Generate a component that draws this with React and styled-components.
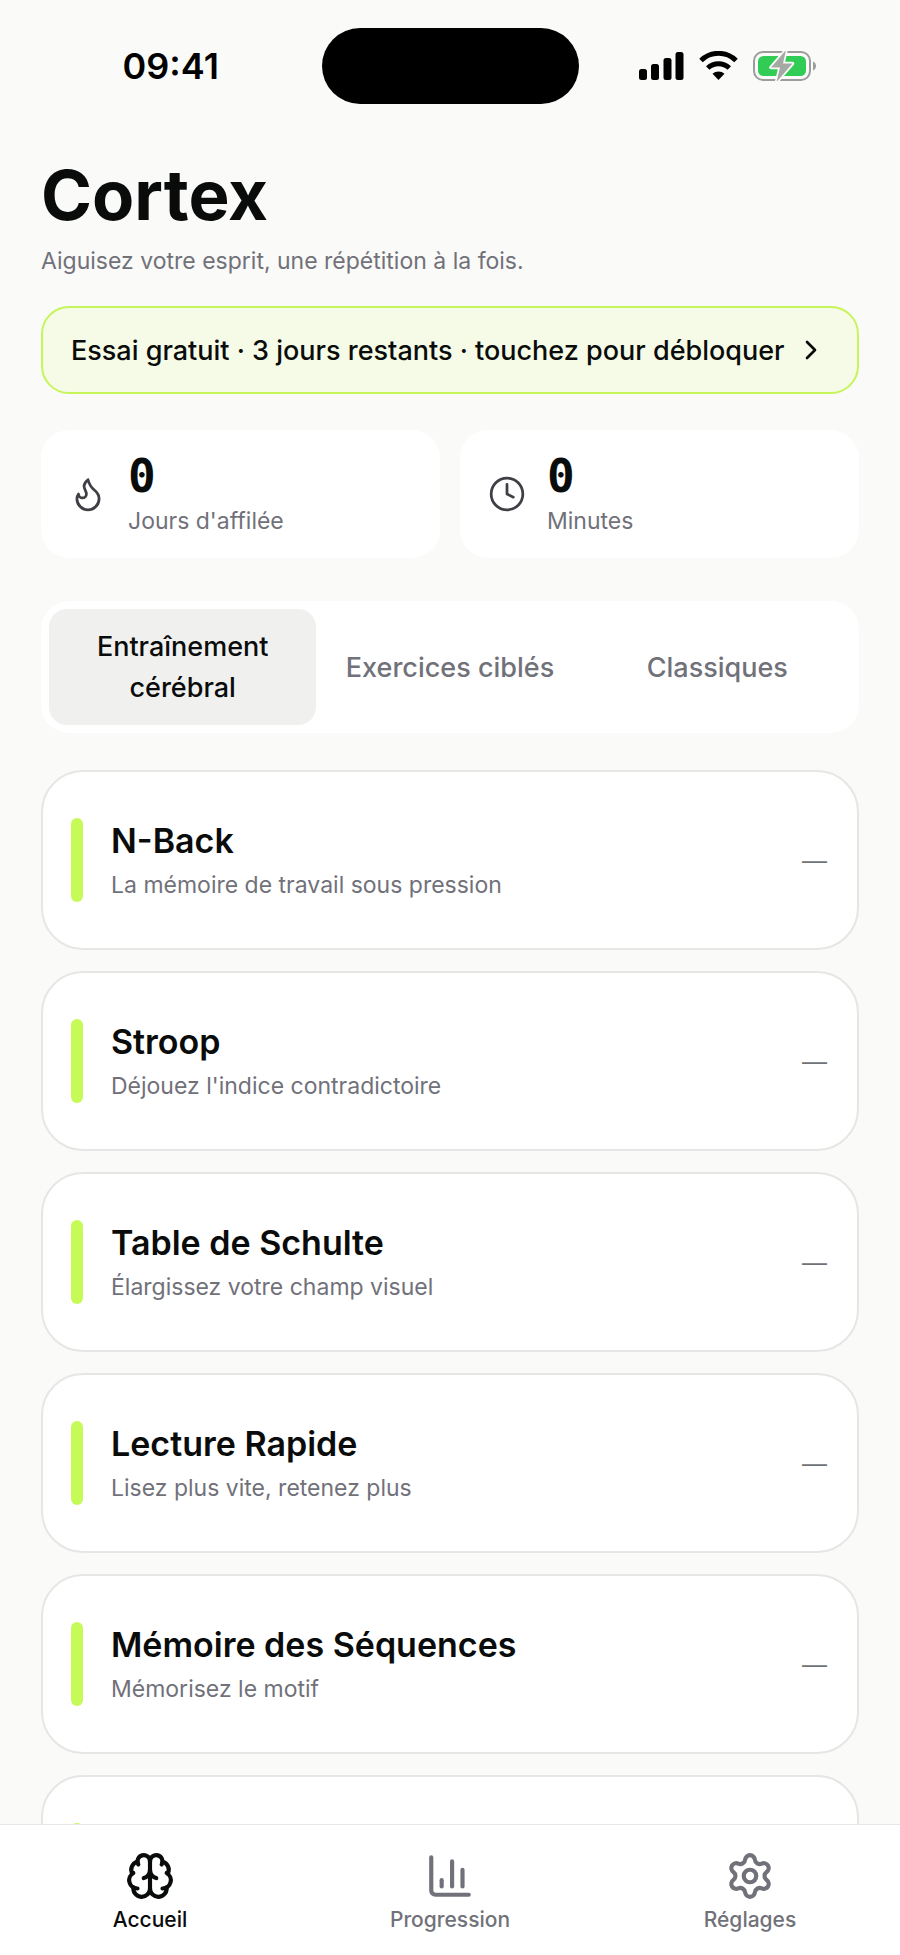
import React, { useState } from 'react';
import styled, { createGlobalStyle } from 'styled-components';
import { Brain, ChartColumn, ChevronRight, Clock, Flame, Settings } from 'lucide-react';

const stats = [
  { label: "Jours d'affilée", value: 0, icon: Flame },
  { label: 'Minutes', value: 0, icon: Clock },
];

const tabs = ['Entraînement cérébral', 'Exercices ciblés', 'Classiques'];

const exercises = [
  { name: 'N-Back', hint: 'La mémoire de travail sous pression' },
  { name: 'Stroop', hint: "Déjouez l'indice contradictoire" },
  { name: 'Table de Schulte', hint: 'Élargissez votre champ visuel' },
  { name: 'Lecture Rapide', hint: 'Lisez plus vite, retenez plus' },
  { name: 'Mémoire des Séquences', hint: 'Mémorisez le motif' },
];

const navItems = [
  { label: 'Accueil', icon: Brain, href: '#accueil' },
  { label: 'Progression', icon: ChartColumn, href: '#progression' },
  { label: 'Réglages', icon: Settings, href: '#reglages' },
];

const GlobalStyle = createGlobalStyle`
  * {
    box-sizing: border-box;
  }

  body {
    margin: 0;
    background: #fafaf8;
    color: #0a0c0c;
    font-family: Inter, 'Liberation Sans', sans-serif;
  }

  button {
    border: 0;
    padding: 0;
    background: none;
    color: inherit;
    font: inherit;
    cursor: pointer;
  }
`;

const Screen = styled.div`
  display: flex;
  flex-direction: column;
  height: 100vh;
  overflow: hidden;
`;

const StatusBar = styled.div`
  display: grid;
  grid-template-columns: 1fr 257px 1fr;
  align-items: center;
  padding-top: 28px;
  flex-shrink: 0;
`;

const Time = styled.time`
  justify-self: center;
  padding-left: 20px;
  color: #000;
  font-size: 36px;
  font-weight: 600;
  line-height: 48px;
`;

const Island = styled.div`
  height: 76px;
  border-radius: 38px;
  background: #000;
`;

const StatusIcons = styled.svg`
  justify-self: center;
  margin-right: 22px;
`;

const Content = styled.main`
  flex: 1;
  min-height: 0;
  overflow: hidden;
  padding: 53px 41px 0;
`;

const Title = styled.h1`
  margin: 0;
  font-size: 69px;
  font-weight: 700;
  line-height: 76px;
`;

const Subtitle = styled.p`
  margin: 10px 0 0;
  color: #71717a;
  font-size: 23px;
  line-height: 36px;
`;

const TrialBanner = styled.button`
  display: flex;
  align-items: center;
  justify-content: space-between;
  width: 100%;
  height: 88px;
  margin-top: 27px;
  padding: 0 30px 0 28px;
  border: 2px solid #c6f55a;
  border-radius: 28px;
  background: #f5fbe6;
  font-size: 27px;
  font-weight: 500;
  text-align: left;
`;

const Stats = styled.div`
  display: grid;
  grid-template-columns: 1fr 1fr;
  gap: 20px;
  margin-top: 36px;
`;

const StatCard = styled.div`
  display: flex;
  align-items: center;
  gap: 21px;
  height: 128px;
  padding: 0 28px;
  border-radius: 28px;
  background: #fff;

  svg {
    color: #3f3f46;
  }
`;

const StatValue = styled.div`
  font-family: 'DejaVu Sans Mono', monospace;
  font-size: 46px;
  font-weight: 700;
  line-height: 54px;
`;

const StatLabel = styled.div`
  color: #71717a;
  font-size: 23px;
  line-height: 36px;
`;

const Tabs = styled.div`
  display: grid;
  grid-template-columns: repeat(3, 1fr);
  margin-top: 43px;
  padding: 8px;
  border-radius: 28px;
  background: #fff;
`;

const Tab = styled.button`
  min-height: 116px;
  padding: 0 16px;
  border-radius: 18px;
  background: ${props => (props.$active ? '#f0f1ee' : 'transparent')};
  color: ${props => (props.$active ? '#0a0c0c' : '#71717a')};
  font-size: 27px;
  font-weight: 500;
  line-height: 41px;
`;

const ExerciseList = styled.div`
  display: flex;
  flex-direction: column;
  gap: 21px;
  margin-top: 37px;
`;

const ExerciseCard = styled.button`
  display: flex;
  align-items: center;
  flex-shrink: 0;
  gap: 28px;
  width: 100%;
  height: 180px;
  padding: 0 30px 0 28px;
  border: 2px solid #e6e6e4;
  border-radius: 42px;
  background: #fff;
  text-align: left;
`;

const Accent = styled.span`
  width: 12px;
  height: 84px;
  border-radius: 6px;
  background: #c6fa56;
`;

const ExerciseText = styled.span`
  display: flex;
  flex: 1;
  flex-direction: column;
`;

const ExerciseName = styled.span`
  font-size: 34px;
  font-weight: 600;
  line-height: 50px;
`;

const ExerciseHint = styled.span`
  color: #71717a;
  font-size: 23px;
  line-height: 38px;
`;

const Score = styled.span`
  color: #71717a;
  font-family: 'Liberation Sans', sans-serif;
  font-size: 25px;
`;

const TabBar = styled.nav`
  display: grid;
  grid-template-columns: repeat(3, 1fr);
  flex-shrink: 0;
  height: 131px;
  border-top: 1px solid #e6e6e4;
  background: #fff;
`;

const NavItem = styled.a`
  display: flex;
  flex-direction: column;
  align-items: center;
  padding-top: 26px;
  color: ${props => (props.$active ? '#0a0c0c' : '#71717a')};
  font-size: 21px;
  font-weight: 500;
  line-height: 38px;
  text-decoration: none;
`;

const DeviceIcons = () => (
  <StatusIcons width="178" height="30" viewBox="0 0 178 30" aria-hidden="true">
    <rect x="0" y="18" width="8" height="11" rx="2.5" />
    <rect x="12" y="13" width="8" height="16" rx="2.5" />
    <rect x="24.5" y="7" width="8" height="22" rx="2.5" />
    <rect x="36.5" y="1" width="8" height="28" rx="2.5" />
    <g fill="none" stroke="#000" strokeWidth="5">
      <path d="M62 9.5a25 25 0 0 1 35 0" />
      <path d="M68.7 17a16 16 0 0 1 21.600 0" />
    </g>
    <path d="M79.5 29l-6-6.2a9 9 0 0 1 12 0z" />
    <rect x="115" y="1" width="56" height="28" rx="9" fill="none" stroke="#9c9c9c" strokeWidth="2" />
    <rect x="119" y="5" width="48" height="20" rx="5.5" fill="#30cc55" />
    <path d="M174 10.5c4 1 4 8 0 9z" fill="#9c9c9c" />
    <path
      d="M147-1l-15 17.500h9l-3.500 14.500 16-18.500h-9.500z"
      fill="#a5a8a3"
      stroke="#fafaf8"
      strokeWidth="3.5"
      strokeLinejoin="round"
      paintOrder="stroke"
    />
  </StatusIcons>
);

const App = () => {
  const [activeTab, setActiveTab] = useState(tabs[0]);

  return (
    <>
      <GlobalStyle />
      <Screen>
        <StatusBar>
          <Time>09:41</Time>
          <Island />
          <DeviceIcons />
        </StatusBar>

        <Content>
          <Title>Cortex</Title>
          <Subtitle>Aiguisez votre esprit, une répétition à la fois.</Subtitle>

          <TrialBanner>
            Essai gratuit · 3 jours restants · touchez pour débloquer
            <ChevronRight size={32} />
          </TrialBanner>

          <Stats>
            {stats.map(({ label, value, icon: Icon }) => (
              <StatCard key={label}>
                <Icon size={38} strokeWidth={1.75} />
                <div>
                  <StatValue>{value}</StatValue>
                  <StatLabel>{label}</StatLabel>
                </div>
              </StatCard>
            ))}
          </Stats>

          <Tabs role="tablist">
            {tabs.map(tab => (
              <Tab
                key={tab}
                role="tab"
                aria-selected={tab === activeTab}
                $active={tab === activeTab}
                onClick={() => setActiveTab(tab)}
              >
                {tab}
              </Tab>
            ))}
          </Tabs>

          <ExerciseList>
            {exercises.map(({ name, hint }) => (
              <ExerciseCard key={name}>
                <Accent />
                <ExerciseText>
                  <ExerciseName>{name}</ExerciseName>
                  <ExerciseHint>{hint}</ExerciseHint>
                </ExerciseText>
                <Score>—</Score>
              </ExerciseCard>
            ))}
            <ExerciseCard aria-label="Exercice suivant">
              <Accent />
            </ExerciseCard>
          </ExerciseList>
        </Content>

        <TabBar>
          {navItems.map(({ label, icon: Icon, href }, i) => (
            <NavItem key={label} href={href} $active={i === 0}>
              <Icon size={50} />
              {label}
            </NavItem>
          ))}
        </TabBar>
      </Screen>
    </>
  );
};

export default App;
